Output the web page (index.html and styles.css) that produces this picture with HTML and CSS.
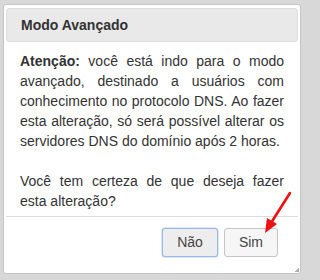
FILE: index.html
```html
<!DOCTYPE html>
<html lang="pt">
<head>
<meta charset="utf-8">
<link rel="stylesheet" href="styles.css">
</head>
<body>
<div class="page">
  <div class="dialog">
    <div class="titlebar"><span class="title">Modo Avançado</span></div>
    <div class="content">
      <p><strong>Atenção:</strong> você está indo para o modo avançado, destinado a usuários com conhecimento no protocolo DNS. Ao fazer esta alteração, só será possível alterar os servidores DNS do domínio após 2 horas.</p>
      <p>Você tem certeza de que deseja fazer esta alteração?</p>
    </div>
    <div class="buttonpane">
      <button class="btn focused">Não</button>
      <button class="btn">Sim</button>
    </div>
    <span class="grip"></span>
  </div>
  <svg class="arrow" width="40" height="50" viewBox="0 0 40 50">
    <line x1="34" y1="3" x2="15" y2="33" stroke="#f01010" stroke-width="2.6" stroke-linecap="round"/>
    <polygon points="9,43 11,28 21,34" fill="#f01010"/>
  </svg>
</div>
</body>
</html>
```
FILE: styles.css
```css
html, body {
  margin: 0;
  padding: 0;
  background: #d8d8d8;
}
.page {
  position: relative;
  width: 306px;
  height: 280px;
  padding-top: 4px;
  box-sizing: border-box;
  font-family: "Liberation Sans", Arial, sans-serif;
  font-size: 14px;
  color: #333;
}
.dialog {
  position: relative;
  margin-left: 3px;
  width: 298px;
  height: 270px;
  box-sizing: border-box;
  background: #fff;
  border: 1px solid #c5c5c5;
  border-radius: 3px;
  padding: 3px 2px;
  display: flex;
  flex-direction: column;
}
.titlebar {
  background: #e9e9e9;
  border: 1px solid #dddddd;
  border-radius: 3px;
  padding: 6px 14px;
  line-height: 20px;
}
.title {
  font-weight: bold;
}
.content {
  flex: 1;
  padding: 9px 14px 0 14px;
  line-height: 20px;
  text-align: justify;
}
.content p {
  margin: 0 0 20px 0;
}
.content p:last-child {
  margin-bottom: 0;
}
.buttonpane {
  border-top: 1px solid #dddddd;
  padding: 11px 20px 13px 0;
  display: flex;
  justify-content: flex-end;
  gap: 6px;
}
.btn {
  font-family: "Liberation Sans", Arial, sans-serif;
  font-size: 14px;
  color: #454545;
  background: #f6f6f6;
  border: 1px solid #c5c5c5;
  border-radius: 3px;
  padding: 5px 14px;
  line-height: 17px;
  height: 29px;
  margin: 0;
}
.btn.focused {
  background: #ededed;
  border-color: #9ab8ea;
  box-shadow: 0 0 0 0.5px #b8cff2;
}
.grip {
  position: absolute;
  right: 1px;
  bottom: 1px;
  width: 4px;
  height: 4px;
  background: linear-gradient(135deg, transparent 50%, #b0b0b0 50%);
}
.arrow {
  position: absolute;
  left: 256px;
  top: 190px;
}
```
